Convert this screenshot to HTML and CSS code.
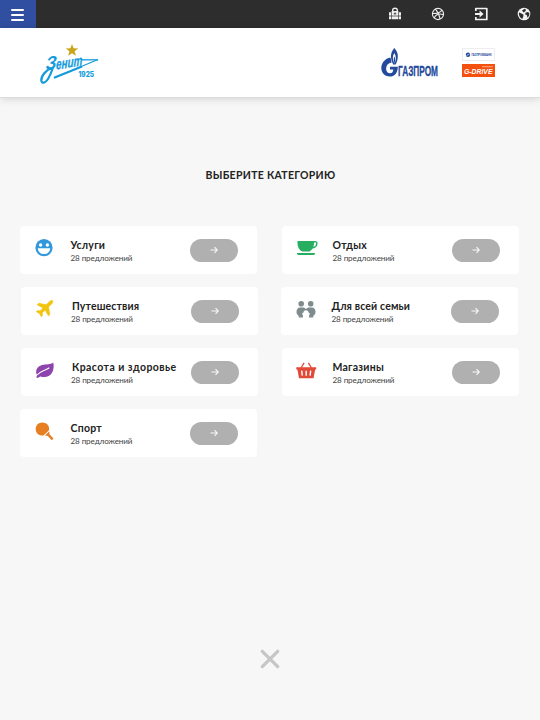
FILE: index.html
```html
<!DOCTYPE html>
<html lang="ru">
<head>
    <meta charset="UTF-8">
    <meta name="viewport" content="width=device-width, initial-scale=1.0">
    <title>Зенит - Категории</title>
    <link rel="stylesheet" href="styles.css">
</head>
<body>
    <!-- Arrow shared by all card buttons -->
    <svg class="sprite" width="0" height="0">
        <symbol id="arrow" viewBox="0 0 8 8">
            <path d="M.5 4h6.700M4.500 1.200L7.300 4 4.500 6.800" fill="none" stroke="#f8f8f8" stroke-width="1.100"/>
        </symbol>
    </svg>

    <!-- Top bar -->
    <div class="topbar">
        <button class="menu-btn" aria-label="Меню">
            <span></span><span></span><span></span>
        </button>
        <div class="top-icons">
            <svg width="14" height="14" viewBox="0 0 14 14">
                <path d="M4.700 4.500V3.200a2.300 2 0 0 1 4.600 0v1.300" fill="none" stroke="#eee" stroke-width="1.400"/>
                <path d="M3.600 4h6.800v8.300H3.600zM1 5.200h2v7.100H1zM11 5.200h2v7.100h-2z" fill="#eee"/>
                <path d="M.8 9h12.400M7 5.300v2.600M5.700 6.600h2.600" stroke="#2d2d2d" stroke-width=".7"/>
            </svg>
            <svg width="14" height="14" viewBox="0 0 14 14">
                <g fill="none" stroke="#eee" stroke-width="1.100">
                    <circle cx="7" cy="7" r="5.600"/>
                    <path d="M4.400 2.200C7 5 8.400 8 9 12M1.600 6.500c4.200.1 7.500-.8 9.400-3.400M3.200 10.900c1.700-3.500 5.200-4.500 9.200-3.300"/>
                </g>
            </svg>
            <svg width="14" height="14" viewBox="0 0 14 14">
                <path d="M1.800 4V1.500h11v11h-11V10" fill="none" stroke="#f2f2f2" stroke-width="1.700" stroke-linejoin="round"/>
                <path d="M1 6h4.600V3.400L9.600 7l-4 3.600V8H1z" fill="#f2f2f2"/>
            </svg>
            <svg width="14" height="14" viewBox="0 0 14 14">
                <circle cx="7" cy="7" r="6.300" fill="#f2f2f2"/>
                <path d="M1.900 5.500l2.600.9 2 1.300-.2 1.700-1 2.700C3 11 1.700 8.500 1.900 5.500zM5 3.500l2.700-1.700 1.300.9-.6 1.500-1.700 1.400zM8.300 6l2-1 2 .8-.1 2.700-1.700 2.300-.7-2.700-1.500-.6z" fill="#2d2d2d"/>
            </svg>
        </div>
    </div>

    <!-- Logos -->
    <header class="header">
        <svg class="zenit" width="60" height="42" viewBox="0 0 60 42">
            <path d="M32 0l1.600 4.300 4.600.2-3.600 2.800 1.300 4.400-3.900-2.500-3.800 2.500 1.200-4.400-3.600-2.800 4.600-.2z" fill="#c9a51c"/>
            <g fill="none" stroke="#149bdc">
                <path d="M41 15.800h17" stroke-width="1.300"/>
                <path d="M58 15.500L14 34" stroke-width="1.300"/>
                <path d="M42 22.500L14 33.800" stroke-width="2"/>
                <path d="M12 24C6 25.500 1 32.500 1.300 36.500c.3 3.500 4.200 2.500 6.700-1.500 2-3.200 3.500-7 5-11.500" stroke-width="2.200"/>
            </g>
            <text class="zenit-z" transform="translate(5.500 26) rotate(-9) skewX(-12)" textLength="11" lengthAdjust="spacingAndGlyphs">З</text>
            <text class="zenit-word" transform="translate(16 25.500) rotate(-9) skewX(-10)" textLength="26.500" lengthAdjust="spacingAndGlyphs">енит</text>
            <text class="zenit-year" x="38.500" y="33" textLength="15.500" lengthAdjust="spacingAndGlyphs">1925</text>
        </svg>
        <div class="partners">
            <svg width="58" height="30" viewBox="0 0 58 30">
                <path d="M13.300 0C9.500 4.200 8.700 10 12.200 16.500h2.500C18 10 17.400 4.200 13.300 0z" fill="#234a9c"/>
                <path d="M13.300 5c-2 3.200-2 7 .1 10.500 2-3.500 2-7.300-.1-10.500z" fill="#fff"/>
                <path d="M13.400 8.500c-1 2-.9 4.600 0 7 1-2.400 1-5 0-7z" fill="#234a9c"/>
                <path d="M9.500 9.500C4 10.500.300 15 .300 20c0 5.200 4 8.500 8.600 8.500 4.300 0 7.600-2.700 8-9.800H9v2.800h3.300c-.3 2.800-1.400 3.700-3.200 3.700-2.500 0-4-2-4-4.800 0-3 2-5.400 5.500-6z" fill="#234a9c"/>
                <text class="gazprom" x="17" y="27.700" textLength="40" lengthAdjust="spacingAndGlyphs">ГАЗПРОМ</text>
            </svg>
            <div class="banners">
                <svg width="33" height="13" viewBox="0 0 33 13">
                    <rect x=".5" y=".5" width="32" height="12" fill="#fff" stroke="#ededf2"/>
                    <circle cx="6" cy="6.700" r="2.200" fill="#234a9c"/>
                    <path d="M4.500 7.600l3-1.600" stroke="#fff" stroke-width=".6"/>
                    <text class="bank-text" x="9.500" y="8" textLength="20" lengthAdjust="spacingAndGlyphs">ГАЗПРОМБАНК</text>
                </svg>
                <svg width="33" height="13" viewBox="0 0 33 13">
                    <rect width="33" height="13" fill="#f4500f"/>
                    <path d="M20 2.700h11" stroke="#ffc2a3" stroke-width=".8"/>
                    <text class="gdrive-text" x="2" y="9.500" textLength="28.500" lengthAdjust="spacingAndGlyphs">G-DRIVE</text>
                </svg>
            </div>
        </div>
    </header>

    <main>
        <h1>ВЫБЕРИТЕ КАТЕГОРИЮ</h1>

        <div class="categories">
            <div class="card services">
                <svg class="icon" width="22" height="20" viewBox="0 0 22 20">
                    <circle cx="9" cy="8.700" r="8.600" fill="#3398db"/>
                    <path d="M2.800 9.300h12.400c-.2 3.900-2.800 5.800-6.200 5.800s-6-1.900-6.200-5.800z" fill="#fff"/>
                    <circle cx="5.600" cy="6" r="1.700" fill="#fff"/>
                    <circle cx="12.400" cy="6" r="1.700" fill="#fff"/>
                </svg>
                <div class="info">
                    <h2>Услуги</h2>
                    <p>28 предложений</p>
                </div>
                <button class="go" aria-label="Услуги"><svg width="8" height="8"><use href="#arrow"/></svg></button>
            </div>

            <div class="card leisure">
                <svg class="icon" width="22" height="20" viewBox="0 0 22 20">
                    <path d="M.5 1.900h17.200c2.500 0 3.300 1.500 2.800 3.600-.6 2.400-2.400 3.800-5 4-1 1.900-2.600 3.100-4.600 3.100H7C3 12.600 0 8.400.5 1.900z" fill="#27ae60"/>
                    <path d="M17.100 3.600h1c1 0 1.200.7.9 1.700-.4 1.400-1.300 2.300-2.700 2.600.6-1.400.8-2.700.8-4.300z" fill="#fff"/>
                    <path d="M0 14h18v.7l-1 1.200H1L0 14.700z" fill="#27ae60"/>
                </svg>
                <div class="info">
                    <h2>Отдых</h2>
                    <p>28 предложений</p>
                </div>
                <button class="go" aria-label="Отдых"><svg width="8" height="8"><use href="#arrow"/></svg></button>
            </div>

            <div class="card travel">
                <svg class="icon" width="22" height="20" viewBox="0 0 22 20">
                    <path d="M2.600 3.300l7.700 1.500L13.600 1.500C14.700.5 16 .2 16.600.7c.5.6.2 1.900-.8 3l-3.300 3.300 1.300 7.500-1.400 1.300-3.200-5.800-3.100 3 .4 2.500-1.200 1.200-1.700-3.200L.4 11.800l1.200-1.200 2.500.4 3-3.100L1.200 4.700z" fill="#f1c40f" stroke="#f1c40f" stroke-width=".7" stroke-linejoin="round"/>
                </svg>
                <div class="info">
                    <h2>Путешествия</h2>
                    <p>28 предложений</p>
                </div>
                <button class="go" aria-label="Путешествия"><svg width="8" height="8"><use href="#arrow"/></svg></button>
            </div>

            <div class="card family">
                <svg class="icon" width="22" height="20" viewBox="0 0 22 20">
                    <g fill="#7f8c8d">
                        <circle cx="5.200" cy="3.700" r="2.800"/>
                        <circle cx="14.700" cy="3.700" r="2.800"/>
                        <path d="M4 7.500h3c1.300 0 2 .6 3 1.500 1-.9 1.700-1.500 3-1.500h3c2 0 3.500 1.900 3.500 4.300 0 1.800-.7 3.300-2.200 4v1.800H13l.2-2.600c1.300-1.500.5-2-.6-2.200-.1-1.500-1-2.500-2.600-2.500s-2.500 1-2.600 2.500c-1.100.2-1.900.7-.6 2.200l.2 2.600H2.700v-1.800C1.200 15.100.5 13.600.5 11.800.5 9.400 2 7.500 4 7.500z"/>
                    </g>
                </svg>
                <div class="info">
                    <h2>Для всей семьи</h2>
                    <p>28 предложений</p>
                </div>
                <button class="go" aria-label="Для всей семьи"><svg width="8" height="8"><use href="#arrow"/></svg></button>
            </div>

            <div class="card beauty">
                <svg class="icon" width="22" height="20" viewBox="0 0 22 20">
                    <path d="M17.200 1.500c.9 3 .6 7.500-1.300 10.500-2.300 3.700-6.800 5-11.500 3.400L1.500 17 .2 16.200l1-1.700C-1.300 10 1 5.300 6 4 10 3 14.500 3.800 17.200 1.500z" fill="#8e44ad"/>
                    <path d="M1 14C4 10.300 8 10.200 13.300 6.700" fill="none" stroke="#fff" stroke-width="1.100"/>
                </svg>
                <div class="info">
                    <h2>Красота и здоровье</h2>
                    <p>28 предложений</p>
                </div>
                <button class="go" aria-label="Красота и здоровье"><svg width="8" height="8"><use href="#arrow"/></svg></button>
            </div>

            <div class="card shops">
                <svg class="icon" width="22" height="20" viewBox="0 0 22 20">
                    <path d="M4 7l2.800-4.700M14.500 7l-2.800-4.700" stroke="#e04a38" stroke-width="1.300" stroke-linecap="round"/>
                    <path d="M-.7 6.300h19.900v2.200h-1L16.500 17.200H2L.4 8.500h-1.100z" fill="#e04a38"/>
                    <path d="M4.700 9.700l.6 5M9.200 9.700v5M13.700 9.700l-.6 5" stroke="#fff" stroke-width="1.400"/>
                </svg>
                <div class="info">
                    <h2>Магазины</h2>
                    <p>28 предложений</p>
                </div>
                <button class="go" aria-label="Магазины"><svg width="8" height="8"><use href="#arrow"/></svg></button>
            </div>

            <div class="card sport">
                <svg class="icon" width="22" height="20" viewBox="0 0 22 20">
                    <path d="M7.300.5c4 0 6.800 2.800 6.800 6.300 0 .6-.1 1.200-.3 1.700L8.500 13.400C3.500 13.800.7 10.900.7 6.900.7 3.300 3.500.5 7.300.5z" fill="#e67e22"/>
                    <path d="M10 13.500l4.300-4.300.2 3 4 4.200-1.700 1.800-4-4.200z" fill="#e67e22"/>
                </svg>
                <div class="info">
                    <h2>Спорт</h2>
                    <p>28 предложений</p>
                </div>
                <button class="go" aria-label="Спорт"><svg width="8" height="8"><use href="#arrow"/></svg></button>
            </div>
        </div>
    </main>

    <button class="close" aria-label="Закрыть">
        <svg width="20" height="20" viewBox="0 0 20 20">
            <path d="M2.300 2.300l15.400 15.400M17.700 2.300L2.300 17.700" stroke="#c6c6c6" stroke-width="3.300" stroke-linecap="round"/>
        </svg>
    </button>
</body>
</html>
```

FILE: styles.css
```css
* {
    box-sizing: border-box;
}
body {
    margin: 0;
    height: 720px;
    background: #f7f7f7;
    font-family: Lato, "Open Sans", sans-serif;
    color: #222;
    display: flex;
    flex-direction: column;
    overflow: hidden;
}
svg {
    display: block;
    overflow: visible;
}
.sprite {
    position: absolute;
}
button {
    border: none;
    padding: 0;
    cursor: pointer;
}

/* Top bar */
.topbar {
    display: flex;
    justify-content: space-between;
    height: 28px;
    flex-shrink: 0;
    background: #2d2d2d;
}
.menu-btn {
    width: 35.5px;
    padding: 2px 1px 0 0;
    background: #304fa1;
    display: flex;
    flex-direction: column;
    align-items: center;
    justify-content: center;
    gap: 2.4px;
}
.menu-btn span {
    width: 13px;
    height: 2.4px;
    border-radius: 1px;
    background: #fff;
}
.top-icons {
    display: flex;
    align-items: center;
    gap: 28.7px;
    padding: 0 9.5px 1px 0;
}

/* Logos */
.header {
    display: flex;
    justify-content: space-between;
    align-items: flex-start;
    height: 70px;
    flex-shrink: 0;
    padding: 16px 45.5px 0 39.5px;
    background: #fff;
    border-bottom: 1px solid #dcdcdc;
    box-shadow: 0 1px 8px rgba(0, 0, 0, 0.15);
}
.partners {
    display: flex;
    align-items: flex-start;
    gap: 22.5px;
    padding-top: 3.5px;
}
.banners {
    display: flex;
    flex-direction: column;
    gap: 3px;
}
.zenit-z {
    font: italic bold 18px "Liberation Sans", sans-serif;
    fill: #149bdc;
}
.zenit-word {
    font: italic bold 14.5px "Liberation Sans", sans-serif;
    fill: #149bdc;
    stroke: #149bdc;
    stroke-width: 0.3px;
}
.zenit-year {
    font: bold 7.5px Inter, sans-serif;
    fill: #149bdc;
    stroke: #149bdc;
    stroke-width: 0.2px;
}
.gazprom {
    font: bold 14px "Liberation Sans", sans-serif;
    fill: #234a9c;
    stroke: #234a9c;
    stroke-width: 0.3px;
}
.bank-text {
    font: bold 3.6px "Liberation Sans", sans-serif;
    fill: #234a9c;
}
.gdrive-text {
    font: italic bold 7.8px "Liberation Sans", sans-serif;
    fill: #fff;
}

/* Categories */
h1 {
    margin: 69px 0 0 1px;
    font-size: 10.5px;
    line-height: 16px;
    font-weight: 700;
    letter-spacing: 0.3px;
    text-align: center;
}
.categories {
    display: grid;
    grid-template-columns: 237px 237px;
    grid-auto-rows: 48.5px;
    gap: 12.6px 24.5px;
    padding: 42.5px 0 0 20.5px;
}
.card {
    display: flex;
    align-items: flex-start;
    padding: 13px 19px 0 15px;
    background: #fff;
    border-radius: 4px;
}
.services,
.sport {
    margin: 0 0.5px 0 -0.5px;
}
.family {
    margin: 0 1px 0 -1px;
}
.icon {
    flex-shrink: 0;
}
.info {
    flex: 1;
    padding-left: 13.5px;
}
h2 {
    margin: -1px 0 0;
    font-size: 10.5px;
    line-height: 14px;
    font-weight: 700;
    letter-spacing: 0.25px;
    white-space: nowrap;
}
.travel h2,
.beauty h2 {
    padding-left: 1px;
}
.beauty h2 {
    letter-spacing: 0.45px;
}
.travel h2,
.family h2 {
    letter-spacing: 0.15px;
}
.info p {
    margin: 0;
    font-size: 8.1px;
    line-height: 12px;
    letter-spacing: -0.1px;
    color: #444;
    white-space: nowrap;
}
.go {
    width: 48px;
    height: 23px;
    flex-shrink: 0;
    border-radius: 12px;
    background: #b0b0b0;
    display: flex;
    align-items: center;
    justify-content: center;
}

/* Close */
.close {
    width: 20px;
    height: 20px;
    margin: auto auto 51px;
    background: transparent;
}
```
